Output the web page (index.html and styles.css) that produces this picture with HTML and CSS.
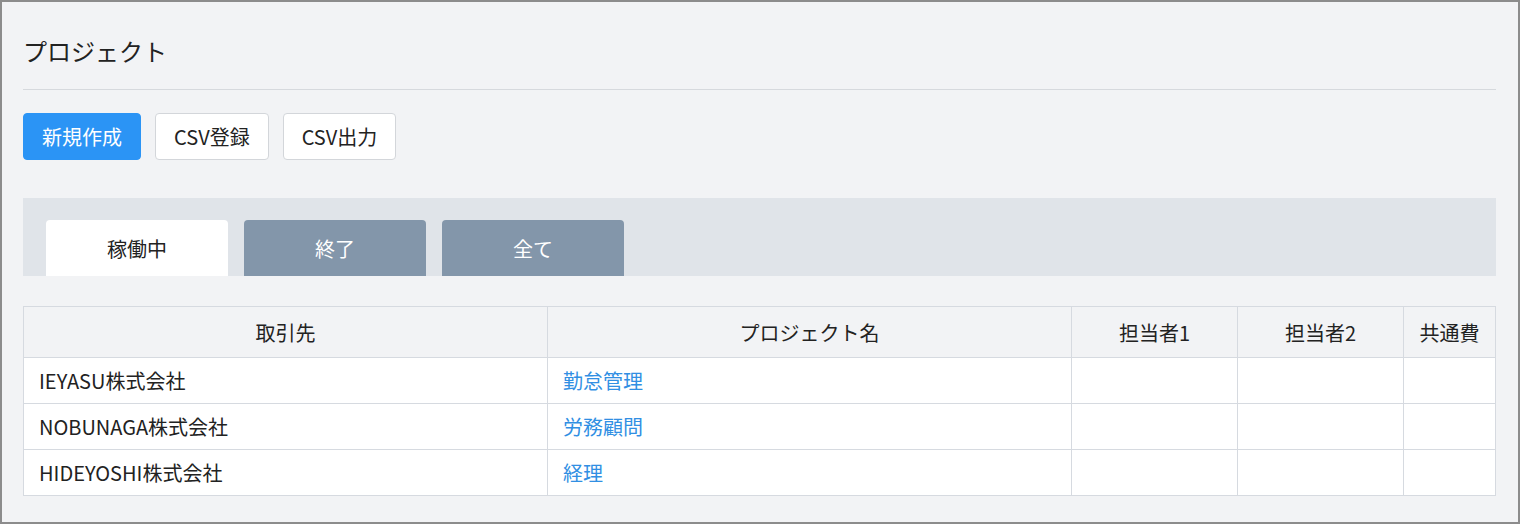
FILE: index.html
```html
<!DOCTYPE html>
<html lang="ja">
<head>
  <meta charset="UTF-8">
  <title>プロジェクト</title>
  <link rel="stylesheet" href="styles.css">
</head>
<body>
  <div class="panel">
    <h1 class="panel-title">プロジェクト</h1>

    <div class="actions">
      <button class="btn btn-primary">新規作成</button>
      <button class="btn">CSV登録</button>
      <button class="btn">CSV出力</button>
    </div>

    <div class="tabs">
      <a class="tab active">稼働中</a>
      <a class="tab">終了</a>
      <a class="tab">全て</a>
    </div>

    <table class="list">
      <colgroup>
        <col class="col-client">
        <col class="col-name">
        <col class="col-person">
        <col class="col-person">
        <col class="col-common">
      </colgroup>
      <thead>
        <tr>
          <th>取引先</th>
          <th>プロジェクト名</th>
          <th>担当者1</th>
          <th>担当者2</th>
          <th>共通費</th>
        </tr>
      </thead>
      <tbody>
        <tr>
          <td>IEYASU株式会社</td>
          <td><a href="#">勤怠管理</a></td>
          <td></td><td></td><td></td>
        </tr>
        <tr>
          <td>NOBUNAGA株式会社</td>
          <td><a href="#">労務顧問</a></td>
          <td></td><td></td><td></td>
        </tr>
        <tr>
          <td>HIDEYOSHI株式会社</td>
          <td><a href="#">経理</a></td>
          <td></td><td></td><td></td>
        </tr>
      </tbody>
    </table>
  </div>
</body>
</html>
```

FILE: styles.css
```css
html, body {
  margin: 0;
  height: 100%;
}

body {
  font-family: "Noto Sans CJK JP", "Noto Sans", sans-serif;
  color: #222;
  background-color: #f2f3f5;
}

.panel {
  box-sizing: border-box;
  height: 524px;
  border: 2px solid #8c8c8c;
  background-color: #f2f3f5;
  padding: 0 22px 0 21px;
}

.panel-title {
  margin: 0;
  padding: 32px 0 21px 0;
  font-size: 24px;
  line-height: 34px;
  font-weight: normal;
  border-bottom: 1px solid #d6d9dd;
}

.actions {
  display: flex;
  gap: 14px;
  margin-top: 23px;
}

.btn {
  height: 47px;
  padding: 0 18px;
  font-family: inherit;
  font-size: 20px;
  color: #222;
  background-color: #fff;
  border: 1px solid #d3d6da;
  border-radius: 4px;
  cursor: pointer;
}

.btn-primary {
  color: #fff;
  background-color: #2b94f5;
  border-color: #2b94f5;
}

.tabs {
  display: flex;
  gap: 16px;
  margin-top: 38px;
  padding: 22px 23px 0;
  background-color: #e0e4e9;
}

.tab {
  width: 182px;
  height: 56px;
  display: flex;
  align-items: center;
  justify-content: center;
  font-size: 20px;
  color: #fff;
  background-color: #8396aa;
  border-radius: 4px 4px 0 0;
  cursor: pointer;
}

.tab.active {
  color: #222;
  background-color: #fff;
}

.list {
  width: 100%;
  margin-top: 30px;
  border-collapse: collapse;
  table-layout: fixed;
  font-size: 20px;
}

.col-client, .col-name { width: 524px; }
.col-person { width: 166px; }
.col-common { width: 92px; }

.list th, .list td {
  border: 1px solid #d6dae0;
  padding: 0 15px;
}

.list th {
  height: 50px;
  font-weight: normal;
  text-align: center;
  background-color: #f2f3f5;
}

.list td {
  height: 45px;
  background-color: #fff;
}

.list a {
  color: #318fe3;
  text-decoration: none;
}
```
